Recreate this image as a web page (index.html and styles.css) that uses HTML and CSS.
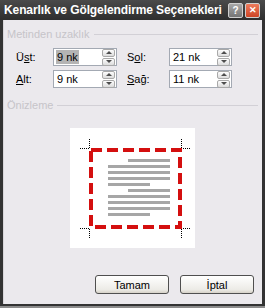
FILE: index.html
```html
<!DOCTYPE html>
<html lang="tr">
<head>
    <meta charset="UTF-8">
    <title>Kenarlık ve Gölgelendirme Seçenekleri</title>
    <link rel="stylesheet" href="styles.css">
</head>
<body>

    <div class="window">
        <!-- Title bar -->
        <div class="titlebar">
            <span class="title">Kenarlık ve Gölgelendirme Seçenekleri</span>
            <div class="title-buttons">
                <span class="tb-btn help">?</span>
                <span class="tb-btn close">&#x2715;</span>
            </div>
        </div>

        <div class="client">
            <!-- Distance from text -->
            <div class="group-header">
                <span class="group-label">Metinden uzaklık</span>
                <span class="group-line"></span>
            </div>

            <div class="fields">
                <label class="field-label">Ü<u>s</u>t:</label>
                <div class="spin-input">
                    <span class="value selected">9 nk</span>
                    <div class="spin"><span class="up"></span><span class="down"></span></div>
                </div>
                <label class="field-label">S<u>o</u>l:</label>
                <div class="spin-input">
                    <span class="value">21 nk</span>
                    <div class="spin"><span class="up"></span><span class="down"></span></div>
                </div>

                <label class="field-label"><u>A</u>lt:</label>
                <div class="spin-input">
                    <span class="value">9 nk</span>
                    <div class="spin"><span class="up"></span><span class="down"></span></div>
                </div>
                <label class="field-label"><u>S</u>ağ:</label>
                <div class="spin-input">
                    <span class="value">11 nk</span>
                    <div class="spin"><span class="up"></span><span class="down"></span></div>
                </div>
            </div>

            <!-- Preview -->
            <div class="group-header preview-header">
                <span class="group-label">Önizleme</span>
                <span class="group-line"></span>
            </div>

            <div class="preview">
                <svg width="125" height="120" viewBox="0 0 125 120">
                    <!-- crop marks -->
                    <g stroke="#000" stroke-width="1" stroke-dasharray="1 1">
                        <path d="M10 20.5H19M19.5 11V20M111 20.5H120M111.5 11V20"/>
                        <path d="M10 100.5H19M19.5 101V110M111 100.5H120M111.5 101V110"/>
                    </g>
                    <!-- text lines -->
                    <g fill="#a6a6a6">
                        <rect x="58" y="31" width="42" height="3"/>
                        <rect x="38" y="37" width="62" height="3"/>
                        <rect x="38" y="43" width="62" height="3"/>
                        <rect x="38" y="49" width="62" height="3"/>
                        <rect x="38" y="55" width="42" height="3"/>
                        <rect x="58" y="61" width="42" height="3"/>
                        <rect x="38" y="67" width="62" height="3"/>
                        <rect x="38" y="73" width="62" height="3"/>
                        <rect x="38" y="79" width="62" height="3"/>
                        <rect x="38" y="85" width="42" height="3"/>
                    </g>
                    <!-- page border -->
                    <rect x="21" y="22" width="89" height="77" fill="none" stroke="#d40f0f" stroke-width="4" stroke-dasharray="11 5"/>
                </svg>
            </div>

            <div class="buttons">
                <button class="btn">Tamam</button>
                <button class="btn">İptal</button>
            </div>
        </div>
    </div>

</body>
</html>
```

FILE: styles.css
```css
body {
    margin: 0;
    padding: 0;
    font-family: "Liberation Sans", Arial, sans-serif;
    font-size: 11px;
    background-color: #3a3a3a;
}

.window {
    width: 265px;
    height: 308px;
    box-sizing: border-box;
    display: flex;
    flex-direction: column;
    background: linear-gradient(#4a4a4a, #2e2e2e 20px, #333 20px);
    border-bottom: 2px solid #8c8c8c;
}

/* Title bar */
.titlebar {
    height: 20px;
    display: flex;
    align-items: center;
    justify-content: space-between;
    gap: 4px;
    padding: 0 5px 0 4px;
}

.title {
    color: #fff;
    font-weight: bold;
    font-size: 12px;
    letter-spacing: -0.1px;
    white-space: nowrap;
    min-width: 0;
    overflow: hidden;
}

.title-buttons {
    display: flex;
    gap: 2px;
    flex-shrink: 0;
}

.tb-btn {
    width: 13px;
    height: 13px;
    border: 1px solid #cfcfcf;
    border-radius: 2px;
    color: #fff;
    font-weight: bold;
    font-size: 10px;
    line-height: 13px;
    text-align: center;
}

.help {
    background: linear-gradient(#a8a8a8, #757575);
}

.close {
    background: linear-gradient(#ec7b5c, #cf4526);
    font-size: 9px;
}

/* Client area */
.client {
    flex: 1;
    margin: 0 3px 2px 3px;
    background-color: #ebe9ed;
    display: flex;
    flex-direction: column;
    padding: 7px 4px 0 3px;
    border-left: 1px solid #d8d6da;
}

.group-header {
    display: flex;
    align-items: center;
    gap: 4px;
    height: 13px;
}

.group-label {
    color: #c6c4c9;
}

.group-line {
    flex: 1;
    border-top: 1px solid #d2d0d6;
    margin-top: 1px;
}

.fields {
    display: grid;
    grid-template-columns: 27px 64px 32px 63px;
    column-gap: 10px;
    row-gap: 4px;
    margin: 8px 0 0 9px;
    align-items: center;
}

.field-label {
    color: #000;
}

.spin-input {
    height: 18px;
    box-sizing: border-box;
    border: 1px solid #a3a9b3;
    background: #fff;
    display: flex;
    align-items: center;
    justify-content: space-between;
    padding: 0 1px 0 2px;
}

.value {
    padding: 1px 1px;
    color: #000;
}

.value.selected {
    background-color: #b4b4b4;
}

.spin {
    display: flex;
    flex-direction: column;
    gap: 1px;
    width: 13px;
}

.spin span {
    height: 6px;
    border: 1px solid #a9a9a9;
    border-radius: 2px;
    background: linear-gradient(#fdfdfd, #dcdcdc);
    position: relative;
}

.spin span::after {
    content: "";
    position: absolute;
    left: 3px;
    border-left: 3px solid transparent;
    border-right: 3px solid transparent;
}

.spin .up::after {
    top: 1px;
    border-bottom: 3px solid #4d4d4d;
}

.spin .down::after {
    top: 1px;
    border-top: 3px solid #4d4d4d;
}

.preview-header {
    margin-top: 10px;
}

.preview {
    align-self: center;
    margin-top: 17px;
    width: 125px;
    height: 120px;
    background: #fff;
}

.preview svg {
    display: block;
}

.buttons {
    margin-top: auto;
    display: flex;
    justify-content: flex-end;
    gap: 11px;
    padding: 0 4px 10px 0;
}

.btn {
    width: 74px;
    height: 19px;
    font-family: "Liberation Sans", Arial, sans-serif;
    font-size: 11px;
    color: #000;
    border: 1px solid #4f4f4f;
    border-radius: 3px;
    background: linear-gradient(#ffffff, #ecebe6 80%, #d6d2c8);
    padding: 0;
}
```
